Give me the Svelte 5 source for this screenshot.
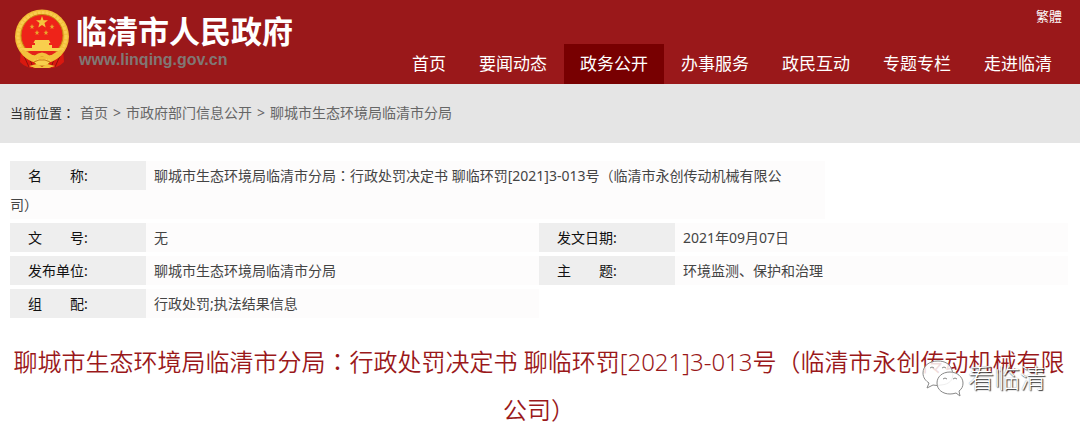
<script>
    const nav = [
        "首页",
        "要闻动态",
        "政务公开",
        "办事服务",
        "政民互动",
        "专题专栏",
        "走进临清",
    ];
    const current = "政务公开";

    const crumbs = ["首页", "市政府部门信息公开", "聊城市生态环境局临清市分局"];

    const heading =
        "聊城市生态环境局临清市分局：行政处罚决定书 聊临环罚[2021]3-013号（临清市永创传动机械有限公司）";

    const info = [
        { label: "名　　称:", value: heading, wide: true },
        { label: "文　　号:", value: "无" },
        { label: "发文日期:", value: "2021年09月07日" },
        { label: "发布单位:", value: "聊城市生态环境局临清市分局" },
        { label: "主　　题:", value: "环境监测、保护和治理" },
        { label: "组　　配:", value: "行政处罚;执法结果信息" },
    ];

    // full-width colons and brackets are set centred in their box
    const split = (text) => text.split(/([：（）])/);
</script>

{#snippet rich(text)}
    {#each split(text) as part, i}{#if i % 2}<span class="mark">{part}</span>{:else}{part}{/if}{/each}
{/snippet}

<header>
    <a class="logo" href="#home">
        <svg class="emblem" viewBox="0 0 56 60" aria-hidden="true">
            <path d="M7 40 L6 53 Q13 60 22 59 H34 Q43 60 50 53 L49 40 Z" fill="#d9190f" />
            <path d="M10 47 L15 58 M16 50 L19 59 M46 47 L41 58 M40 50 L37 59" stroke="#8f100d" stroke-width="1" />
            <circle cx="28" cy="27.500" r="27" fill="#f2bd35" />
            <circle cx="28" cy="27.500" r="24" fill="none" stroke="#f9cd50" stroke-width="3" stroke-dasharray="3 1" />
            <circle cx="28" cy="26.500" r="21" fill="#ee2319" stroke="#c98513" />
            <path
                d="M28 7 L29.500 11.200 H34 L30.500 14 L31.700 18.500 L28 15.900 L24.300 18.500 L25.500 14 L22 11.200 H26.500 Z"
                fill="#f4c43d"
            />
            <g fill="#e9a52c">
                <path id="star" d="M18 15 L18.700 16.800 L20.500 16.900 L19 18 L19.500 20 L18 18.900 L16.500 20 L17 18 L15.500 16.900 L17.300 16.800 Z" />
                <use href="#star" x="20" />
                <use href="#star" x="5" y="6" />
                <use href="#star" x="14" y="6" />
            </g>
            <path
                d="M21 31 H35 L36.500 34 H35 V36 H38 V39 H48 Q46 41 45 42 H11 L8 39 H18 V36 H21 V34 H19.500 Z"
                fill="#f8cf4d"
            />
            <path d="M12 42.500 H44 L40 46 H16 Z" fill="#e3231a" />
            <path
                d="M7 40 Q15 43 20 47 Q28 40 36 47 Q41 43 49 40 L45 48 L38 52 L33 49 Q28 46 23 49 L18 52 L11 48 Z"
                fill="#f3c13c"
            />
            <path d="M20 53 L25 51 H31 L36 53 L32 57 H24 Z" fill="#f8cf4d" stroke="#c97814" />
            <path d="M15 57 L23 55 L28 58 L33 55 L41 57 L35 59 H21 Z" fill="#f3c13c" />
        </svg>
        <span class="site">
            <strong>临清市人民政府</strong>
            <span class="domain">www.linqing.gov.cn</span>
        </span>
    </a>
    <div class="menu">
        <a class="language" href="#traditional" lang="zh-Hant">繁體</a>
        <nav>
            {#each nav as item}
                <a href="#{item}" class:active={item === current}>{item}</a>
            {/each}
        </nav>
    </div>
</header>

<div class="breadcrumb">
    <span class="here">{@render rich("当前位置：")}</span>
    {#each crumbs as crumb, i}
        {#if i > 0}<span>&gt;</span>{/if}
        <a href="#{crumb}">{crumb}</a>
    {/each}
</div>

<main>
    <div class="info">
        {#each info as { label, value, wide }}
            <div class="entry" class:wide>
                <span class="label">{label}</span>{@render rich(value)}
            </div>
        {/each}
    </div>

    <div class="title">
        <h1>{@render rich(heading)}</h1>
        <div class="watermark">
            <svg viewBox="0 0 42 37" aria-hidden="true">
                <path
                    d="M16 1 C7 1 1 6 1 13 C1 18 4 21 7 23 L5 28 L11 25 Q15 26 19 25 C31 24 32 16 30 10 C28 4 23 1 16 1 Z"
                />
                <path
                    d="M28 12 C20 12 15 17 15 23 C15 30 21 34 28 34 Q31 34 34 33 L38 36 L37 31 C40 29 41 26 41 23 C41 17 35 12 28 12 Z"
                />
                <path d="M8 8 q2 -2 4 0 M20 8 q2 -2 4 0 M21 19 q2 -2 4 0 M31 19 q2 -2 4 0" />
            </svg>
            <span>看临清</span>
        </div>
    </div>
</main>

<style>
    :global(body) {
        margin: 0;
        background: #fff;
        font-family: "Noto Sans", "Noto Sans CJK SC", sans-serif;
        font-size: 14px;
        color: #444;
    }

    a {
        color: inherit;
        text-decoration: none;
    }

    .mark {
        font-family: "Noto Sans CJK TC", sans-serif;
        line-height: 1;
    }

    header {
        display: flex;
        justify-content: space-between;
        height: 84px;
        padding: 0 12px;
        background: #9a181a;
        color: #fff;
    }

    .logo {
        display: flex;
        align-items: flex-start;
        gap: 6px;
        padding: 9px 0 0 2px;
    }

    .emblem {
        width: 56px;
        height: 60px;
    }

    .site {
        display: flex;
        flex-direction: column;
        padding-top: 4px;
    }

    .site strong {
        font-size: 31px;
        line-height: 36px;
    }

    .domain {
        padding: 2px 0 0 3px;
        font: bold 16px/18px "Liberation Sans", sans-serif;
        color: #817774;
    }

    .menu {
        display: flex;
        flex-direction: column;
        justify-content: space-between;
        align-items: flex-end;
    }

    .language {
        padding: 6px 6px 0 0;
        font-family: "Noto Sans CJK TC", sans-serif;
        font-size: 13px;
        line-height: 20px;
    }

    nav {
        display: flex;
        gap: 1px;
    }

    nav a {
        padding: 0 16px;
        font-size: 17px;
        line-height: 40px;
    }

    nav a.active {
        background: #780001;
    }

    .breadcrumb {
        display: flex;
        flex-wrap: wrap;
        gap: 5px;
        padding: 19px 10px 20px;
        background: #e5e5e5;
        color: #666;
        line-height: 20px;
    }

    .here {
        font-size: 13px;
        color: #333;
    }

    main {
        padding: 18px 12px 0 10px;
    }

    .info {
        display: grid;
        grid-template-columns: 1fr 1fr;
        row-gap: 4px;
    }

    .entry {
        background: #fdfcfc;
        line-height: 29px;
    }

    .wide {
        grid-column: 1 / -1;
        width: 77%;
        box-sizing: border-box;
        padding-right: 26px;
    }

    .label {
        display: inline-block;
        box-sizing: border-box;
        width: 136px;
        margin-right: 8px;
        padding-left: 18px;
        background: #eee;
        color: #111;
        vertical-align: top;
    }

    .title {
        position: relative;
        margin-top: 20px;
    }

    h1 {
        margin: 0;
        font-size: 24px;
        font-weight: 350;
        line-height: 48px;
        text-align: center;
        color: #9a181a;
    }

    .watermark {
        position: absolute;
        right: 22px;
        top: 20px;
        display: flex;
        align-items: center;
        gap: 4px;
        font-size: 26px;
        font-weight: 300;
        line-height: 40px;
        color: #fff;
        text-shadow: 1px 1px 1px #333, 0 0 1px #888;
    }

    .watermark svg {
        width: 42px;
        height: 37px;
        fill: rgba(255, 255, 255, 0.85);
        stroke: #888;
        stroke-width: 1;
    }
</style>
